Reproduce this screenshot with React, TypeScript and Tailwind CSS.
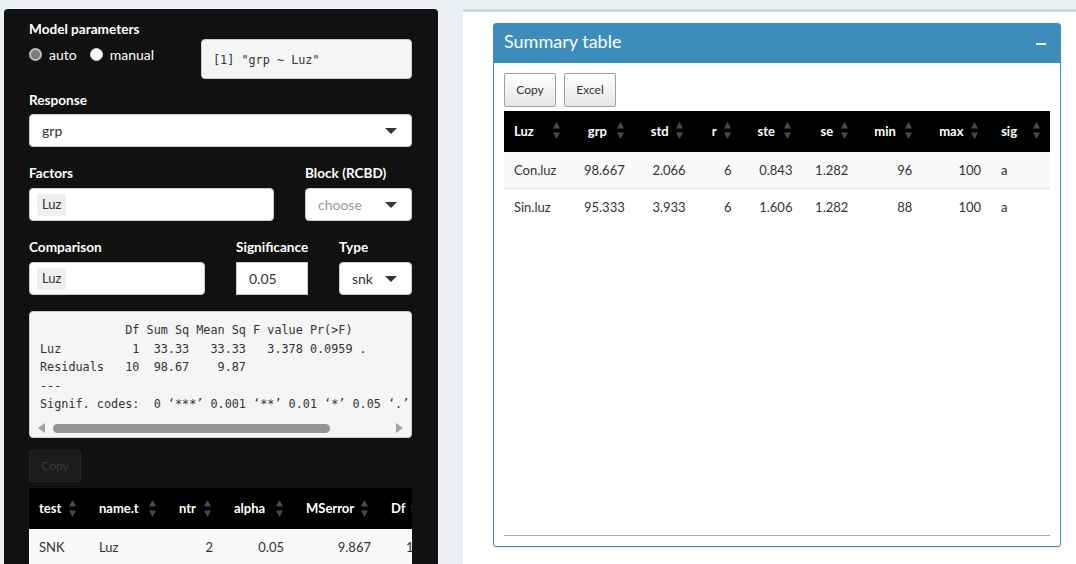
import React from "react";

function SortIcon() {
  return (
    <svg width="7" height="17" viewBox="0 0 7 17">
      <polygon points="3.5,0 7,6.5 0,6.5" fill="#4a4a4a" />
      <polygon points="0,10.5 7,10.5 3.5,17" fill="#4a4a4a" />
    </svg>
  );
}

function Caret() {
  return <span className="w-0 h-0 border-x-[6px] border-x-transparent border-t-[6px] border-t-[#333]" />;
}

function Select({ value, muted }: { value: string; muted?: boolean }) {
  return (
    <div className="flex items-center justify-between h-[33px] rounded-[4px] bg-white border border-[#ccc] pl-[12px] pr-[14px] text-[14px]">
      <span className={muted ? "text-[#999]" : "text-[#333]"}>{value}</span>
      <Caret />
    </div>
  );
}

function ChipInput({ value }: { value: string }) {
  return (
    <div className="flex items-center h-[33px] rounded-[4px] bg-white border border-[#ccc] px-[7px]">
      <span className="flex items-center h-[22px] px-[5px] rounded-[3px] bg-[#efefef] text-[13px] text-[#333]">{value}</span>
    </div>
  );
}

function Label({ children }: { children: React.ReactNode }) {
  return <div className="text-[13.6px] font-bold leading-[18px] text-white whitespace-nowrap">{children}</div>;
}

const anovaText = `            Df Sum Sq Mean Sq F value Pr(>F)
Luz          1  33.33   33.33   3.378 0.0959 .
Residuals   10  98.67    9.87
---
Signif. codes:  0 ‘***’ 0.001 ‘**’ 0.01 ‘*’ 0.05 ‘.’ 0.1 ‘ ’ 1`;

const testCols = [
  { name: "test", w: "w-[60px]", right: false, pr: "" },
  { name: "name.t", w: "w-[80px]", right: false, pr: "" },
  { name: "ntr", w: "w-[55px]", right: true, pr: "pr-[11px]" },
  { name: "alpha", w: "w-[72px]", right: true, pr: "pr-[12px]" },
  { name: "MSerror", w: "w-[85px]", right: true, pr: "pr-[10px]" },
  { name: "Df", w: "w-[50px]", right: true, pr: "pr-[10px]" },
];
const testRow = ["SNK", "Luz", "2", "0.05", "9.867", "10"];

const sumCols = [
  { name: "Luz", w: "w-[74px]", arrow: "right-[18px]", right: false, pr: "" },
  { name: "grp", w: "w-[63px]", arrow: "right-[17px]", right: true, pr: "pr-[16px]" },
  { name: "std", w: "w-[61px]", arrow: "right-[19px]", right: true, pr: "pr-[16px]" },
  { name: "r", w: "w-[46px]", arrow: "right-[17px]", right: true, pr: "pr-[16px]" },
  { name: "ste", w: "w-[63px]", arrow: "right-[19px]", right: true, pr: "pr-[18px]" },
  { name: "se", w: "w-[54px]", arrow: "right-[16px]", right: true, pr: "pr-[16px]" },
  { name: "min", w: "w-[65px]", arrow: "right-[17px]", right: true, pr: "pr-[17px]" },
  { name: "max", w: "w-[62px]", arrow: "right-[13px]", right: true, pr: "pr-[10px]" },
  { name: "sig", w: "w-[59px]", arrow: "right-[10px]", right: false, pr: "" },
];
const sumRows = [
  ["Con.luz", "98.667", "2.066", "6", "0.843", "1.282", "96", "100", "a"],
  ["Sin.luz", "95.333", "3.933", "6", "1.606", "1.282", "88", "100", "a"],
];

export default function App() {
  return (
    <div className="w-[1076px] h-[564px] overflow-hidden bg-[#ecf0f5] flex font-['Lato',sans-serif]">
      {/* sidebar inputs */}
      <aside className="ml-[4px] mt-[9px] w-[434px] shrink-0 rounded-t-[4px] bg-[#111111] pl-[25px] pr-[26px] pt-[11px] text-white">
        <div className="flex">
          <div className="w-[172px]">
            <Label>Model parameters</Label>
            <div className="mt-[7px] flex items-center h-[18px] text-[14px]">
              <span className="w-[13px] h-[13px] rounded-full border-[2px] border-[#bdbdbd] bg-[#7c7c7c]" />
              <span className="ml-[7px]">auto</span>
              <span className="ml-[13px] w-[13px] h-[13px] rounded-full border border-[#ddd] bg-white" />
              <span className="ml-[7px]">manual</span>
            </div>
          </div>
          <div className="mt-[19px] h-[40px] flex-1 flex items-center rounded-[4px] bg-[#f5f5f5] border border-[#ccc] px-[11px] pt-[3px] font-['DejaVu_Sans_Mono',monospace] text-[11.8px] text-[#333] whitespace-pre">
            [1] "grp ~ Luz"
          </div>
        </div>

        <div className="mt-[12px]">
          <Label>Response</Label>
          <div className="mt-[5px]">
            <Select value="grp" />
          </div>
        </div>

        <div className="mt-[17px] flex gap-[31px]">
          <div className="w-[245px]">
            <Label>Factors</Label>
            <div className="mt-[6px]">
              <ChipInput value="Luz" />
            </div>
          </div>
          <div className="w-[107px]">
            <Label>Block (RCBD)</Label>
            <div className="mt-[6px]">
              <Select value="choose" muted />
            </div>
          </div>
        </div>

        <div className="mt-[17px] flex gap-[31px]">
          <div className="w-[176px]">
            <Label>Comparison</Label>
            <div className="mt-[6px]">
              <ChipInput value="Luz" />
            </div>
          </div>
          <div className="w-[72px]">
            <Label>Significance</Label>
            <div className="mt-[6px] h-[33px] flex items-center bg-white border border-[#ccc] pl-[12px] text-[14px] text-[#333]">0.05</div>
          </div>
          <div className="w-[73px]">
            <Label>Type</Label>
            <div className="mt-[6px]">
              <Select value="snk" />
            </div>
          </div>
        </div>

        <div className="mt-[16px] h-[127px] flex flex-col rounded-[4px] bg-[#f5f5f5] border border-[#ccc] overflow-hidden">
          <pre className="flex-1 overflow-hidden pl-[10px] pt-[9px] font-['DejaVu_Sans_Mono',monospace] text-[11.8px] leading-[18.6px] text-[#333]">
            {anovaText}
          </pre>
          <div className="h-[14px] mb-[2px] flex items-center pl-[8px] pr-[8px]">
            <span className="w-0 h-0 border-y-[5px] border-y-transparent border-r-[7px] border-r-[#a3a3a3]" />
            <span className="ml-[8px] w-[277px] h-[9px] rounded-full bg-[#939393]" />
            <span className="ml-auto w-0 h-0 border-y-[5px] border-y-transparent border-l-[7px] border-l-[#a3a3a3]" />
          </div>
        </div>

        <button className="mt-[12px] w-[52px] h-[32px] flex items-center justify-center rounded-[2px] bg-[#1b1b1b] border border-[#252525] text-[12px] text-[#3d3d3d]">
          Copy
        </button>

        <div className="mt-[6px] w-[383px] overflow-hidden">
          <div className="flex w-max h-[41px] bg-black">
            {testCols.map((c) => (
              <div key={c.name} className={`${c.w} relative flex items-center pl-[10px] text-[13px] font-bold`}>
                {c.name}
                <span className="absolute right-[13px] top-[12px]">
                  <SortIcon />
                </span>
              </div>
            ))}
          </div>
          <div className="flex w-max h-[36px] pt-[1px] bg-[#f9f9f9] text-[13px] text-[#333]">
            {testCols.map((c, i) => (
              <div key={c.name} className={`${c.w} flex items-center ${c.right ? `justify-end ${c.pr}` : "pl-[10px]"}`}>
                {testRow[i]}
              </div>
            ))}
          </div>
        </div>
      </aside>

      {/* main content */}
      <main className="ml-[25px] mt-[9px] flex-1 bg-white border-t-[3px] border-[#d2d6de] pl-[30px] pt-[11px]">
        <section className="w-[568px] h-[524px] flex flex-col rounded-[3px] border border-[#3c8dbc] shadow-[0_1px_1px_rgba(0,0,0,0.1)]">
          <header className="h-[39px] flex items-center justify-between bg-[#3c8dbc] pl-[10px] pr-[14px] pb-[5px] text-white">
            <h3 className="text-[18px] leading-none">Summary table</h3>
            <span className="mt-[5px] w-[10px] h-[2px] bg-white/90" />
          </header>
          <div className="flex-1 flex flex-col px-[10px] pt-[10px]">
            <div className="flex gap-[8px]">
              {["Copy", "Excel"].map((b) => (
                <button key={b} className="w-[52px] h-[34px] rounded-[2px] border border-[#a0a0a0] bg-gradient-to-b from-white to-[#e6e6e6] text-[12px] text-[#333]">
                  {b}
                </button>
              ))}
            </div>
            <div className="mt-[4px]">
              <div className="flex h-[41px] bg-black text-white">
                {sumCols.map((c) => (
                  <div key={c.name} className={`${c.w} relative flex items-center pl-[10px] text-[13px] font-bold`}>
                    {c.name}
                    <span className={`absolute ${c.arrow} top-[11px]`}>
                      <SortIcon />
                    </span>
                  </div>
                ))}
              </div>
              {sumRows.map((row, r) => (
                <div key={r} className={`flex h-[37px] pt-[1px] text-[13px] text-[#333] ${r === 0 ? "bg-[#f9f9f9] border-b border-[#ddd]" : "bg-white"}`}>
                  {sumCols.map((c, i) => (
                    <div key={c.name} className={`${c.w} flex items-center ${c.right ? `justify-end ${c.pr}` : "pl-[10px]"}`}>
                      {row[i]}
                    </div>
                  ))}
                </div>
              ))}
            </div>
            <div className="mt-auto mb-[10px] h-px bg-[#aaa]" />
          </div>
        </section>
      </main>
    </div>
  );
}
